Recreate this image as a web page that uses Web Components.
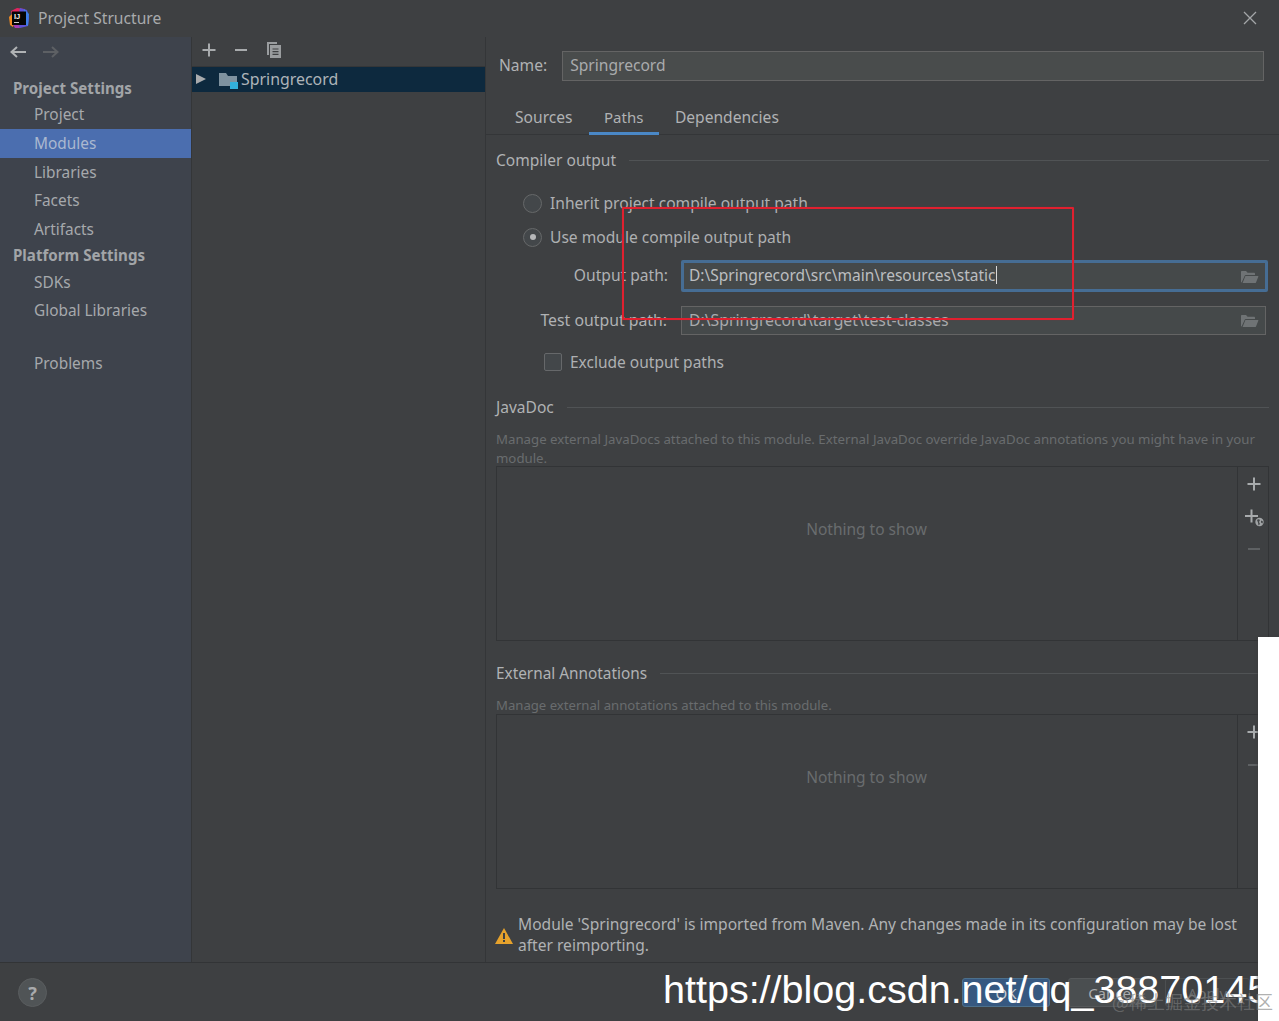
<!DOCTYPE html>
<html lang="en"><head><meta charset="utf-8"><title>Project Structure</title>
<style>
html,body{margin:0;padding:0;background:#3e4042}
body{width:1279px;height:1021px;overflow:hidden;font-family:"Noto Sans","Open Sans",sans-serif;color:#b4b6b8;font-size:15px}
</style></head><body>
<ij-dialog>
  <ij-titlebar slot="title">Project Structure</ij-titlebar>
  <ij-sidebar slot="side">
    <ij-nav head>Project Settings</ij-nav>
    <ij-nav style="padding-bottom:1px">Project</ij-nav>
    <ij-nav selected>Modules</ij-nav>
    <ij-nav style="padding-top:1px">Libraries</ij-nav>
    <ij-nav>Facets</ij-nav>
    <ij-nav style="padding-top:1px">Artifacts</ij-nav>
    <ij-nav head second>Platform Settings</ij-nav>
    <ij-nav>SDKs</ij-nav>
    <ij-nav>Global Libraries</ij-nav>
    <ij-nav problems>Problems</ij-nav>
  </ij-sidebar>
  <ij-tree slot="tree" label="Springrecord"></ij-tree>
  <ij-module slot="panel"></ij-module>
  <ij-footer slot="footer"></ij-footer>
</ij-dialog>
<ij-overlays></ij-overlays>
<script>
function def(name, html, init){
  customElements.define(name, class extends HTMLElement{
    constructor(){super();const r=this.attachShadow({mode:'open'});r.innerHTML=html;}
    connectedCallback(){ if(init) init(this); }
  });
}
const FOLDER='<svg width="19" height="14" viewBox="0 0 19 14" style="display:block"><path d="M1 12V2c0-.7.4-1 1-1h4l1.6 1.8H14c.5 0 1 .3 1 .9V5H5.8c-.5 0-.9.2-1.1.7L1.6 12.4C1.3 12.6 1 12.4 1 12z" fill="#6f7375"/><path d="M5.4 6h12.4c.5 0 .7.4.5.8L16 12.4c-.2.4-.5.6-1 .6H2.6z" fill="#6f7375"/></svg>';
const PLUS=(c='#a8abad',s='')=>`<svg width="14" height="14" viewBox="0 0 14 14" style="${s}"><path d="M6 .5h2V6h5.5v2H8v5.5H6V8H.5V6H6z" fill="${c}"/></svg>`;
const MINUS=(c='#a8abad',s='')=>`<svg width="14" height="14" viewBox="0 0 14 14" style="${s}"><path d="M1 6h12v2H1z" fill="${c}"/></svg>`;

def('ij-dialog',`<style>
:host{display:flex;flex-direction:column;width:1279px;height:1021px;background:#3e4042;overflow:hidden}
.main{display:flex;height:925px;border-bottom:1px solid #323436}
.tree{width:293px;border-left:1px solid #343638;border-right:1px solid #343638;flex:none;display:flex}
.panel{flex:1;min-width:0;display:flex}
</style>
<slot name="title"></slot>
<div class="main"><slot name="side"></slot><div class="tree"><slot name="tree"></slot></div><div class="panel"><slot name="panel"></slot></div></div>
<slot name="footer"></slot>`);

def('ij-titlebar',`<style>
:host{display:flex;align-items:center;height:37px;flex:none;padding:0 22px 0 9px;color:#a9abad;font-size:15.65px;gap:9px}
.t{flex:1;padding-bottom:2px}
.logo{position:relative;width:20px;height:20px;flex:none;margin-bottom:1px}
.logo svg{display:block}
.logo b{position:absolute;left:5px;top:4px;font:700 7.5px/9px "Liberation Sans",sans-serif;color:#f2f2f2;letter-spacing:-.2px}
.x{margin-bottom:2px}
</style>
<span class="logo"><svg width="20" height="20" viewBox="0 0 20 20"><path d="M2 3l6-3 8 1-4 8-8 2z" fill="#e0245e"/><path d="M11 0l7 2 2 8-1 8-8 2-3-5z" fill="#5c52d8"/><path d="M15 1l5 5-1 12-4-2z" fill="#3d7fe8"/><path d="M0 9l4-4 2 8-2 6-3-2z" fill="#f08a24"/><path d="M3 15l6 0 2 5-5 0z" fill="#a33bb5"/><rect x="3" y="3.5" width="14" height="13.5" fill="#050505"/><rect x="5" y="14" width="5" height="1" fill="#cfcfcf"/></svg><b>IJ</b></span><span class="t"><slot></slot></span>
<svg class="x" width="14" height="14" viewBox="0 0 14 14"><path d="M1 1l12 12M13 1L1 13" stroke="#a4a6a8" stroke-width="1.3" fill="none"/></svg>`);

def('ij-sidebar',`<style>
:host{display:flex;flex-direction:column;width:191px;flex:none;background:#3e434c}
.nav{display:flex;gap:16px;height:29px;align-items:center;padding-left:9px;margin-bottom:9px}
.list{display:flex;flex-direction:column}
</style>
<div class="nav">
<svg width="18" height="14" viewBox="0 0 18 14"><path d="M17 7H3M8 2L2.5 7 8 12" stroke="#b0b3b5" stroke-width="2" fill="none"/></svg>
<svg width="16" height="14" viewBox="0 0 16 14"><path d="M0 7h13M9 2l5.5 5L9 12" stroke="#5d6064" stroke-width="2" fill="none"/></svg>
</div>
<div class="list"><slot></slot></div>`);

def('ij-nav',`<style>
:host{display:flex;align-items:center;box-sizing:border-box;height:28.4px;padding-left:34px;color:#a6a9ac;font-size:15.4px}
:host([head]){padding-left:13px;font-weight:700;height:26px;color:#a2a5a8;font-size:15.1px}
:host([second]){height:25px}
:host([selected]){background:#4b6eaf;color:#aab8cf}
:host([problems]){margin-top:25px;height:28px}
</style><slot></slot>`);

def('ij-tree',`<style>
:host{display:flex;flex-direction:column;flex:1;min-width:0}
.bar{display:flex;align-items:center;gap:18px;height:25px;padding:0 0 4px 10px;border-bottom:1px solid #343638}
.row{display:flex;align-items:center;height:25px;background:#0d293e;color:#aeb4b9;font-size:15.9px}
.arrow{width:0;height:0;border-left:10px solid #a8abad;border-top:5.5px solid transparent;border-bottom:5.5px solid transparent;margin:-2px 13px 0 4px}
.ic{margin:2px 3px 0 0;display:block}
#l{padding-bottom:2px}
</style>
<div class="bar">${PLUS()}${MINUS()}
<svg width="16" height="16" viewBox="0 0 16 16"><path d="M1 0h10v2H3v11H1z" fill="#9a9d9f"/><path d="M4 3h11v13H4z" fill="#9a9d9f"/><path d="M6.5 7h6M6.5 9.7h6M6.5 12.4h6" stroke="#3e4042" stroke-width="1.2"/></svg></div>
<div class="row"><span class="arrow"></span>
<svg class="ic" width="19" height="17" viewBox="0 0 19 17"><path d="M0 1h7l2 3h9v10H0z" fill="#7f929f"/><path d="M11 10h8v7h-8z" fill="#33b0dc"/></svg>
<span id="l"></span></div>`,el=>{el.shadowRoot.getElementById('l').textContent=el.getAttribute('label')});

def('ij-input',`<style>
:host{display:flex;align-items:center;box-sizing:border-box;background:#45494a;border:1px solid #646464;color:#a9abad;font-size:15.75px;padding:0 6px 2px 7px;height:100%}
:host([focus]){border:3px solid #466d94;border-radius:2px;padding:0 6px 2px 5px;color:#bcbec0;font-size:15.5px}
:host([plain]){background:#494c4c;font-size:15.6px}
.v{flex:1;white-space:nowrap}
::slotted([slot=icon]){margin-top:3px}
</style><span class="v"><slot></slot></span><slot name="icon"></slot>`);

def('ij-field',`<style>
:host{display:flex;align-items:center;gap:13px;color:#b0b2b4;font-size:15.6px}
.l{width:172px;text-align:right;flex:none;white-space:nowrap;padding-bottom:3px}
:host([tight]){font-size:15.8px}
:host([tight]) .l{width:171px;padding-bottom:1px}
.f{flex:1;min-width:0;height:100%;font-size:15.6px}
</style><span class="l" id="l"></span><div class="f"><slot></slot></div>`,el=>{el.shadowRoot.getElementById('l').textContent=el.getAttribute('label')});

def('ij-section',`<style>
:host{display:flex;align-items:center;height:20px;gap:13px;color:#b0b2b4;font-size:15.55px;white-space:nowrap}
:host([narrow]){font-size:15.35px}
i{flex:1;height:1px;background:#505355}
</style><slot></slot><i></i>`);

def('ij-radio',`<style>
:host{display:flex;align-items:center;height:24px;gap:8px;padding-left:27px;color:#aeb0b2;font-size:15.6px}
.c{width:17px;height:17px;border-radius:50%;border:1px solid #666869;background:#43474a;flex:none;display:flex;align-items:center;justify-content:center}
:host([on]) .c::after{content:"";width:6px;height:6px;border-radius:50%;background:#b6b8ba}
</style><span class="c"></span><slot></slot>`);

def('ij-check',`<style>
:host{display:flex;align-items:center;height:24px;gap:8px;padding-left:48px;color:#aeb0b2;font-size:15.5px}
.c{width:16px;height:16px;border-radius:2px;border:1px solid #66686a;background:#43474a;flex:none}
</style><span class="c"></span><slot></slot>`);

def('ij-table',`<style>
:host{display:flex;height:175px;box-sizing:border-box;border:1px solid #323436;flex:none}
.body{flex:1;display:flex;align-items:flex-start;justify-content:center;color:#696c6e;font-size:15.5px;padding:51px 1px 0 0}
.tools{width:31px;border-left:1px solid #323436;display:flex;flex-direction:column;align-items:center;padding:10px 0 0 1px;box-sizing:border-box;flex:none}
::slotted(svg){display:block;flex:none}
</style><div class="body">Nothing to show</div><div class="tools"><slot></slot></div>`);

def('ij-tabs',`<style>
:host{display:flex;height:35px;box-sizing:border-box;border-bottom:1px solid #343638;padding-left:13px;font-size:15.6px;color:#b0b2b4}
</style><slot></slot>`);
def('ij-tab',`<style>
:host{display:flex;align-items:center;height:35px;box-sizing:border-box;padding:0 16px 2px}
:host([active]){box-shadow:inset 0 -3px 0 #4a88c7;font-size:15px;padding:0 15.500px 2px}
</style><slot></slot>`);

def('ij-module',`<style>
:host{display:block;flex:1;min-width:0;color:#b0b2b4;font-size:15.6px}
.name{display:flex;align-items:center;margin:14px 15px 0 13px;height:30px;gap:15px}
.name .in{flex:1;height:100%}
.name>span{padding-bottom:2px}
.pad{padding:0 10px 0 10px}
.s1{margin-top:15px}
.r1{margin-top:21px}.r2{margin-top:10px}
.out{margin:11px 1px 0 0;height:32px}
.test{margin:14px 3px 0 0;height:29px;gap:14px}
.exc{margin-top:15px}
.s2{margin-top:23px}
.desc{margin:13px 0 0;height:36px;line-height:19px;font-size:13.24px;color:#696c6e}
.s3{margin-top:22px}
.d2{margin:13px 0 0;height:18px;line-height:19px;font-size:13.15px;color:#696c6e}
.warn{display:flex;align-items:center;gap:5px;margin:25px 0 0 -1px;line-height:21px;width:760px;color:#b0b2b4;font-size:15.58px}
.warn svg{flex:none;margin-top:2px}
</style>
<div class="name"><span>Name:</span><div class="in"><ij-input plain>Springrecord</ij-input></div></div>
<ij-tabs style="margin-top:19px"><ij-tab>Sources</ij-tab><ij-tab active>Paths</ij-tab><ij-tab>Dependencies</ij-tab></ij-tabs>
<div class="pad">
<ij-section class="s1">Compiler output</ij-section>
<ij-radio class="r1">Inherit project compile output path</ij-radio>
<ij-radio class="r2" on>Use module compile output path</ij-radio>
<ij-field class="out" label="Output path:"><ij-input focus>D:\\Springrecord\\src\\main\\resources\\static<span style="display:inline-block;width:1px;height:18px;background:#d8d8d8;vertical-align:-3px"></span><span slot="icon">${FOLDER}</span></ij-input></ij-field>
<ij-field class="test" tight label="Test output path:"><ij-input>D:\\Springrecord\\target\\test-classes<span slot="icon">${FOLDER}</span></ij-input></ij-field>
<ij-check class="exc">Exclude output paths</ij-check>
<ij-section class="s2">JavaDoc</ij-section>
<div class="desc">Manage external JavaDocs attached to this module. External JavaDoc override JavaDoc annotations you might have in your module.</div>
<ij-table>${PLUS('#a8abad','')}
<svg width="20" height="18" viewBox="0 0 20 18" style="margin-top:18px"><path d="M6.5 .5h2V6H14v2H8.500v5.500h-2V8H1V6h5.500z" fill="#a8abad"/><circle cx="15.500" cy="13" r="4.200" fill="#a0a3a5"/><path d="M13 11c1 -1 2 -1 3 0l-1 2 1 2-1.500 1.500-.5-3zM17 11.500l2 1-.5 2-1.500-1z" fill="#45484a"/></svg>
${MINUS('#5e6163','margin-top:15px')}</ij-table>
<ij-section class="s3" narrow>External Annotations</ij-section>
<div class="d2">Manage external annotations attached to this module.</div>
<ij-table>${PLUS('#a8abad','')}${MINUS('#5e6163','margin-top:19px')}</ij-table>
<div class="warn"><svg width="18" height="16" viewBox="0 0 18 16"><path d="M9 0l9 16H0z" fill="#e6a22c"/><path d="M8 5h2v6H8zM8 12h2v2H8z" fill="#3e4042"/></svg><span>Module 'Springrecord' is imported from Maven. Any changes made in its configuration may be lost after reimporting.</span></div>
</div>`);

def('ij-button',`<style>
:host{display:flex;align-items:center;justify-content:center;box-sizing:border-box;height:29px;border:1px solid #55585a;border-radius:3px;background:#4a4e50;color:#a9abad;font-size:15px;flex:none}
:host([primary]){background:#365880;border-color:#4c708c;color:#c8ccd0}
:host([disabled]){background:transparent;border-color:#4c4f51;color:#6a6d6f}
</style><slot></slot>`);

def('ij-footer',`<style>
:host{display:flex;align-items:center;flex:1;padding:1px 29px 0 18px;min-height:0}
.help{width:29px;height:29px;border-radius:50%;background:#505456;border:1px solid #5a5d5f;box-sizing:border-box;display:flex;align-items:center;justify-content:center;color:#a9abad;font-weight:700;font-size:18px;margin-right:auto}
.ok{width:88px}
.c{width:87px;margin-left:18px}
.a{width:85px;margin-left:10px}
</style>
<div class="help">?</div>
<ij-button class="ok" primary>OK</ij-button><ij-button class="c">Cancel</ij-button><ij-button class="a" disabled>Apply</ij-button>`);

def('ij-overlays',`<style>
:host{display:block}
.red{position:absolute;left:622px;top:207px;width:452px;height:113px;box-sizing:border-box;border:2px solid #e0202f;border-radius:1px;box-shadow:0 0 1px rgba(224,32,47,.6)}
.white{position:absolute;left:1258px;top:637px;width:21px;height:384px;background:#fff;box-shadow:-1px 0 2px rgba(60,60,60,.6)}
.url{position:absolute;left:663px;top:962px;font:39.500px/54px "Liberation Sans",Arial,sans-serif;color:#fff;white-space:nowrap}
.mark{position:absolute;left:1112px;top:989px;font:18px/24px "Noto Sans CJK SC",sans-serif;color:rgba(125,125,125,.62);white-space:nowrap}
</style>
<div class="red"></div>
<div class="url">https://blog.csdn.net/qq_38870145</div><div class="white"></div>
<div class="mark">@稀土掘金技术社区</div>`);
</script>
</body></html>
